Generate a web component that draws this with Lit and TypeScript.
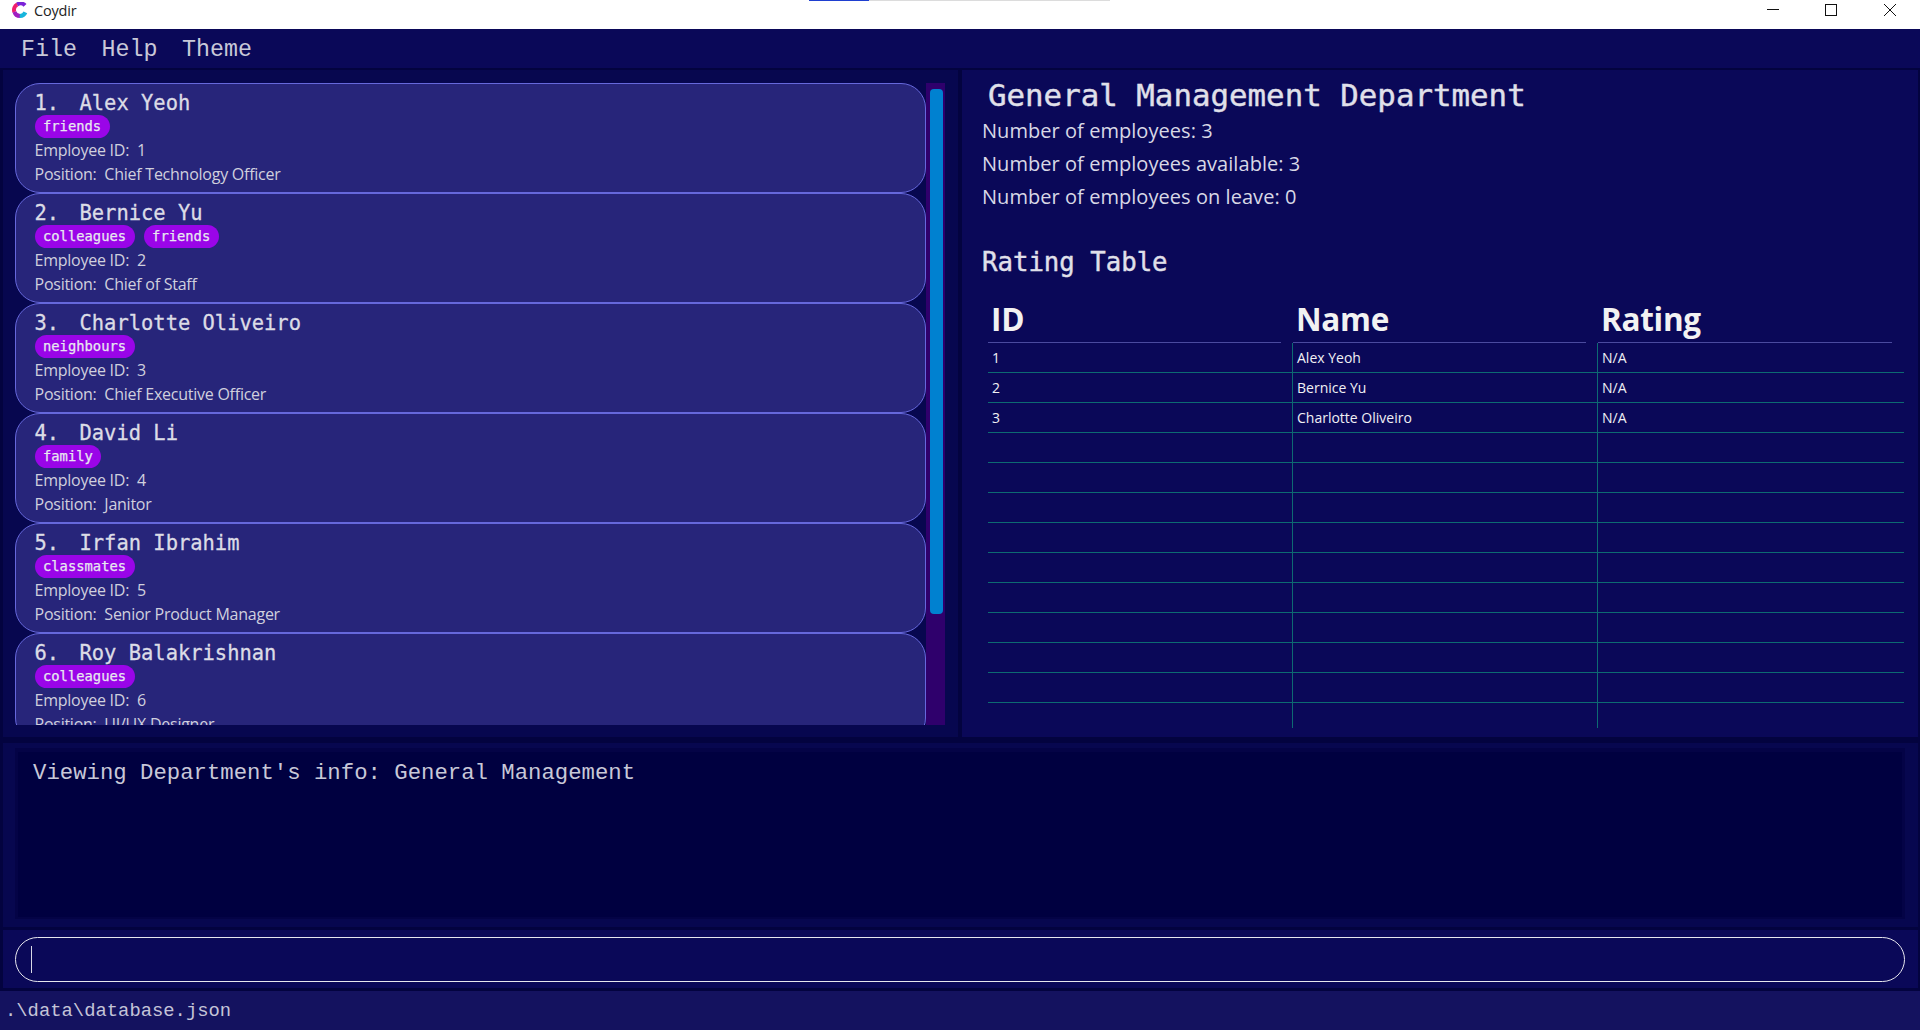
import { LitElement, html, css, svg } from "lit";
import { customElement } from "lit/decorators.js";

const PEOPLE = [
  { n: "Alex Yeoh", t: ["friends"], p: "Chief Technology Officer" },
  { n: "Bernice Yu", t: ["colleagues", "friends"], p: "Chief of Staff" },
  { n: "Charlotte Oliveiro", t: ["neighbours"], p: "Chief Executive Officer" },
  { n: "David Li", t: ["family"], p: "Janitor" },
  { n: "Irfan Ibrahim", t: ["classmates"], p: "Senior Product Manager" },
  { n: "Roy Balakrishnan", t: ["colleagues"], p: "UI/UX Designer" },
];
const ROWS = [
  ["1", "Alex Yeoh", "N/A"],
  ["2", "Bernice Yu", "N/A"],
  ["3", "Charlotte Oliveiro", "N/A"],
  ...Array.from({ length: 9 }, () => ["", "", ""]),
];

const logo = svg`<svg class="logo" viewBox="0 0 16 16" width="16" height="16" fill="none" stroke-width="4">
  <path d="M13 3.4A6 6 0 0 0 5 2.6" stroke="#7a22d8"/>
  <path d="M5.2 2.6A6 6 0 0 0 2.4 10" stroke="#f01f6e"/>
  <path d="M2.4 9.8A6 6 0 0 0 8 14" stroke="#a01fc0"/>
  <path d="M7.8 14A6 6 0 0 0 13.4 10.4" stroke="#17b5dc"/>
</svg>`;

@customElement("app-root")
export class AppRoot extends LitElement {
  static styles = css`
    :host { display: block; width: 1920px; height: 1030px; overflow: hidden; background: #03033f;
      font-family: "Open Sans", "Noto Sans", sans-serif; color: #d8d8e4; }
    * { box-sizing: border-box; }
    .app { display: flex; flex-direction: column; height: 1030px; }
    .mono { font-family: "DejaVu Sans Mono", monospace; }
    .light { font-family: "Liberation Mono", monospace; }

    .titlebar { position: relative; flex: 0 0 29px; background: #fff; display: flex; align-items: flex-start;
      padding: 2px 0 0 12px; color: #222; font-size: 14.5px; gap: 6px; }
    .title-text { line-height: 17px; letter-spacing: -0.2px; }
    .logo { flex: none; }
    .progress { position: absolute; left: 809px; top: 0; width: 301px; height: 1px; background: #dcdcdc; }
    .progress div { width: 60px; height: 1px; background: #1f3fd0; }
    .controls { margin-left: auto; margin-top: -2px; display: flex; align-items: flex-start; height: 29px; }
    .controls svg { display: block; }

    .menu { flex: 0 0 41px; background: #0a0858; border-bottom: 2px solid #03033f; display: flex;
      padding: 4px 0 0 21px; gap: 24.6px; font-size: 23.3px; line-height: 35px; color: #c8c8d8; }

    .main { flex: 0 0 673px; display: flex; }
    .left { width: 955px; margin-left: 3px; background: #07074f; padding: 13px 0 0 12px; flex: none; height: 667px;
      display: flex; }
    .list { width: 911px; height: 642px; overflow: hidden; flex: none; }
    .card { height: 110px; border: 1.5px solid #6668dc; border-radius: 25px; background: #27257a;
      padding: 7px 0 0 18.5px; }
    .name { font-size: 20.45px; line-height: 24px; margin-bottom: -0.5px; color: #dcdce6; white-space: pre;
      display: flex; -webkit-text-stroke: 0.3px #dcdce6; }
    .idx { width: 45px; flex: none; }
    .tags { display: flex; gap: 9px; height: 23px; }
    .tag { height: 23px; line-height: 23px; border-radius: 12px; background: #9a05e8; color: #e8e8f0;
      padding: 0 8.5px; font-size: 13.8px; -webkit-text-stroke: 0.25px #e8e8f0; }
    .line { font-size: 16px; line-height: 24px; color: #d0d0de; white-space: pre; letter-spacing: -0.25px; }
    .line:first-of-type { margin-top: 1.5px; }
    .track { width: 19px; height: 642px; background: #2f006c; padding: 6px 2px 0 4px; flex: none; }
    .thumb { height: 525px; background: #0081d0; border-radius: 4px; }

    .right { margin: 0 2px 0 4px; flex: 1; height: 667px; background: #0a0858; padding: 6px 14px 0 20px; }
    .h1 { font-size: 30.8px; line-height: 38px; color: #e0e0ea; padding-left: 6px; white-space: pre;
      -webkit-text-stroke: 0.4px #e0e0ea; }
    .stat { font-size: 20px; line-height: 33px; color: #d8d8e6; letter-spacing: 0.05px; }
    .h2 { font-size: 25.7px; line-height: 32px; color: #e0e0ea; margin-top: 33px; white-space: pre;
      -webkit-text-stroke: 0.4px #e0e0ea; }
    .table { margin: 22px 0 0 6px; width: 916px; display: grid; grid-template-columns: 305px 305px 306px; }
    .th { height: 43px; padding: 0 12px 0 0; }
    .th div { height: 43px; border-bottom: 1.5px solid #4a4a9e; color: #f2f2f2; font-weight: 700; font-size: 31.5px;
      line-height: 38px; padding-left: 3px; letter-spacing: -0.3px; }
    .td { height: 30px; border-bottom: 1px solid #0d6a72; border-right: 1px solid #0d6a72; color: #f0f0f4;
      font-size: 14px; line-height: 29px; padding-left: 4px; letter-spacing: 0; }
    .td:nth-child(3n) { border-right: none; }
    .tail { height: 25px; border-right: 1px solid #0d6a72; }
    .tail:nth-last-child(1) { border-right: none; }

    .results { flex: 0 0 184px; margin: 0 2px 3px 3px; background: #07074f; padding: 5px 13px 8px 12px; }
    .results-box { height: 171px; background: #000040; border: solid #040346; border-width: 4px 3px 2px 3px;
      padding: 6px 15px; font-size: 22.3px; line-height: 30px; color: #c8c8d8; white-space: pre; }

    .command { flex: 0 0 58px; margin: 0 2px 0 3px; background: #0a0858; padding: 7px 13px 0 12px; }
    .pill { height: 45px; border: 1.5px solid #e6e6ee; border-radius: 23px; padding: 8px 0 0 15px; }
    .caret { width: 1px; height: 27px; background: #d8d8e6; }

    .status { flex: 1; background: #14125f; border-top: 3px solid #03033f; padding-left: 5px; font-size: 18.85px;
      line-height: 40px; color: #c4c4d8; white-space: pre; }
  `;

  render() {
    return html`<div class="app">
      <div class="titlebar">
        ${logo}<span class="title-text">Coydir</span>
        <div class="progress"><div></div></div>
        <div class="controls">
          <svg width="153" height="29" viewBox="0 0 153 29" fill="none" stroke="#111" stroke-width="1">
            <path d="M0 9.5H12"/>
            <rect x="58.5" y="4.5" width="11" height="11"/>
            <path d="M117 4L129 16M129 4L117 16"/>
          </svg>
        </div>
      </div>
      <div class="menu light"><span>File</span><span>Help</span><span>Theme</span></div>
      <div class="main">
        <div class="left">
          <div class="list">
            ${PEOPLE.map((c, i) => html`<div class="card">
              <div class="name mono"><span class="idx">${i + 1}.</span><span>${c.n}</span></div>
              <div class="tags">${c.t.map((t) => html`<span class="tag mono">${t}</span>`)}</div>
              <div class="line">Employee ID:  ${i + 1}</div>
              <div class="line">Position:  ${c.p}</div>
            </div>`)}
          </div>
          <div class="track"><div class="thumb"></div></div>
        </div>
        <div class="right">
          <div class="h1 mono">General Management Department</div>
          <div class="stat">Number of employees: 3</div>
          <div class="stat">Number of employees available: 3</div>
          <div class="stat">Number of employees on leave: 0</div>
          <div class="h2 mono">Rating Table</div>
          <div class="table">
            ${["ID", "Name", "Rating"].map((h) => html`<div class="th"><div>${h}</div></div>`)}
            ${ROWS.map((r) => r.map((v) => html`<div class="td">${v}</div>`))}
            <div class="tail"></div><div class="tail"></div><div class="tail"></div>
          </div>
        </div>
      </div>
      <div class="results">
        <div class="results-box light">Viewing Department's info: General Management</div>
      </div>
      <div class="command"><div class="pill"><div class="caret"></div></div></div>
      <div class="status light">.\\data\\database.json</div>
    </div>`;
  }
}
